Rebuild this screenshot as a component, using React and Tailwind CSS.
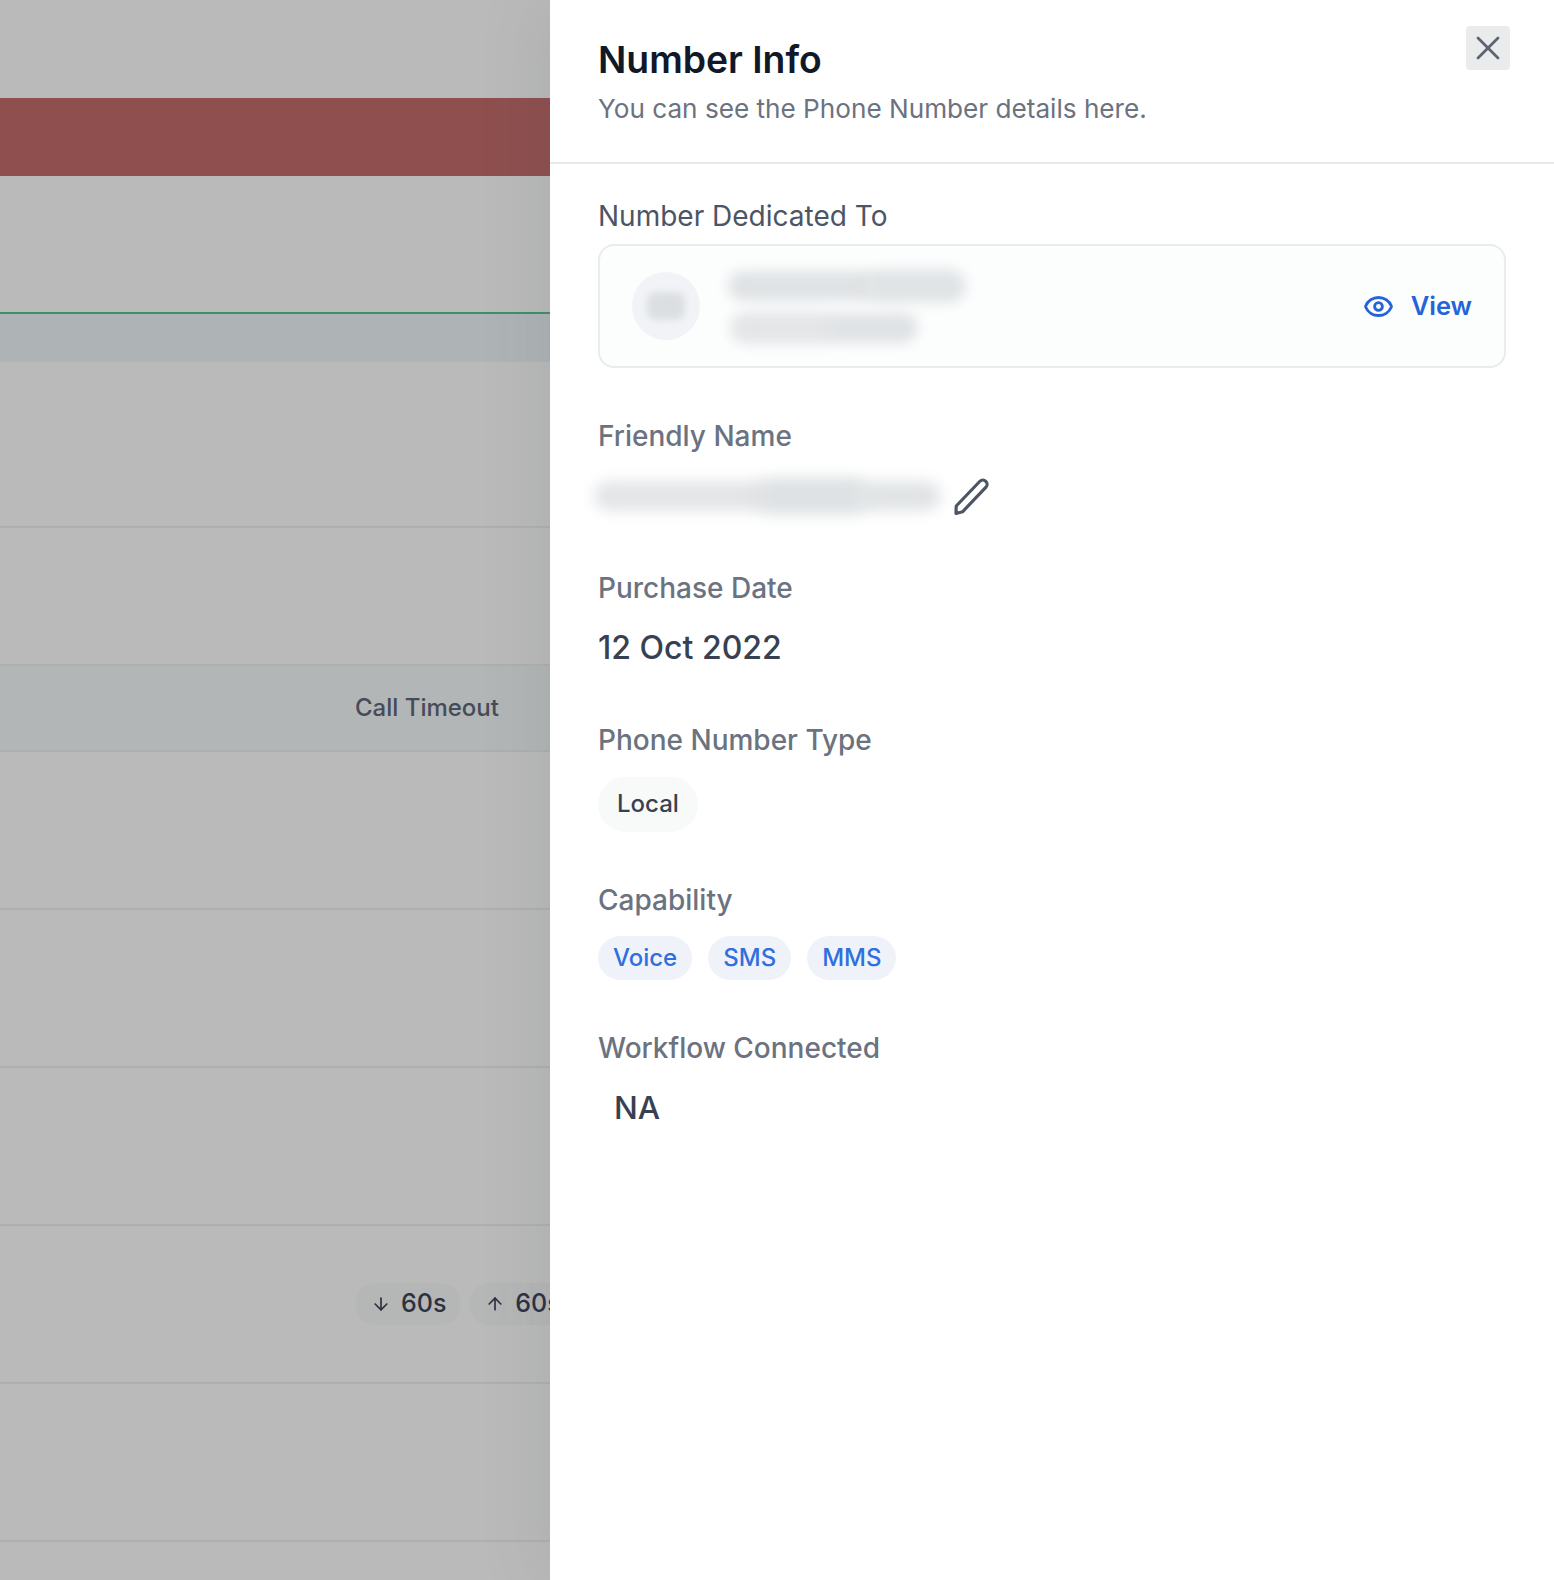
import React from "react";
import { X, Eye, ArrowDown, ArrowUp } from "lucide-react";

function Label({ className = "", children }) {
  return <div className={`text-[28px] leading-[36px] font-medium text-[#6b7280] ${className}`}>{children}</div>;
}

function DarkLabel({ className = "", children }) {
  return <div className={`text-[28px] leading-[36px] font-normal text-[#4b5563] ${className}`}>{children}</div>;
}

function Pill({ children }) {
  return <span className="flex h-[44px] items-center rounded-full bg-[#eff3f9] px-[15px] text-[24px] font-[450] text-[#2f6fde]">{children}</span>;
}

function Backdrop() {
  return (
    <div className="flex h-[1580px] w-[550px] shrink-0 flex-col overflow-hidden bg-[#bababa] text-[#454b57]">
      <div className="h-[98px] shrink-0" />
      <div className="h-[78px] shrink-0 bg-[#8f4f4f]" />
      <div className="h-[136px] shrink-0" />
      <div className="h-[50px] shrink-0 border-t-2 border-[#3f8f6e] bg-[#aeb3b5]" />
      <div className="h-[166px] shrink-0 border-b-2 border-[#afafaf]" />
      <div className="h-[138px] shrink-0 border-b-2 border-[#afafaf]" />
      <div className="flex h-[86px] shrink-0 items-center justify-start border-b-2 border-[#afafaf] bg-[#b3b6b6] pl-[355px] text-[24px] font-[450] whitespace-nowrap">
        Call Timeout
      </div>
      <div className="h-[158px] shrink-0 border-b-2 border-[#afafaf]" />
      <div className="h-[158px] shrink-0 border-b-2 border-[#afafaf]" />
      <div className="h-[158px] shrink-0 border-b-2 border-[#afafaf]" />
      <div className="flex h-[158px] shrink-0 items-center gap-[8px] border-b-2 border-[#afafaf] pl-[355px] text-[25px] font-[450] text-[#2c3140] whitespace-nowrap">
        <span className="flex h-[42px] shrink-0 items-center gap-[10px] rounded-full bg-[#b5b6b6] pr-[15px] pl-[16px]">
          <ArrowDown size={20} strokeWidth={2} />
          60s
        </span>
        <span className="flex h-[42px] shrink-0 items-center gap-[10px] rounded-full bg-[#b5b6b6] pr-[15px] pl-[16px]">
          <ArrowUp size={20} strokeWidth={2} />
          60s
        </span>
      </div>
      <div className="h-[158px] shrink-0 border-b-2 border-[#afafaf]" />
    </div>
  );
}

export default function App() {
  return (
    <div className="flex h-[1580px] w-full overflow-hidden bg-white font-['Inter',sans-serif]">
      <Backdrop />
      <div className="relative z-10 flex w-[1004px] shrink-0 flex-col bg-white shadow-[-10px_0_60px_rgba(70,80,90,0.1)]">
        <div className="flex h-[164px] shrink-0 items-start justify-between border-b-2 border-[#e6e9ee] pr-[44px] pl-[48px]">
          <div className="pt-[37px]">
            <h1 className="text-[37.3px] leading-[45px] font-semibold text-[#111827]">Number Info</h1>
            <p className="mt-[10px] text-[26.15px] leading-[34px] text-[#6b7280]">You can see the Phone Number details here.</p>
          </div>
          <button className="mt-[26px] flex h-[44px] w-[44px] items-center justify-center rounded-[4px] bg-[#e9ebec] text-[#5c6370]">
            <X size={40} strokeWidth={1.6} />
          </button>
        </div>

        <div className="flex flex-col pr-[48px] pl-[48px]">
          <DarkLabel className="mt-[34px]">Number Dedicated To</DarkLabel>
          <div className="mt-[10px] flex h-[124px] items-center justify-between rounded-[16px] border-2 border-[#e8ebef] bg-[#fcfdfd] pr-[32px] pl-[32px]">
            <div className="flex items-center gap-[28px]">
              <div className="flex h-[68px] w-[68px] items-center justify-center rounded-full bg-[#f1f3f7]">
                <div className="h-[28px] w-[38px] rounded-[9px] bg-[#dcdfe2] blur-[3px]" />
              </div>
              <div className="flex flex-col gap-[9px]">
                <div className="flex items-center">
                  <div className="h-[30px] w-[150px] rounded-full bg-[#e0e3e5] blur-[6px]" />
                  <div className="-ml-[14px] h-[34px] w-[102px] rounded-full bg-[#e1e4e6] blur-[6px]" />
                </div>
                <div className="ml-[2px] flex items-center">
                  <div className="h-[32px] w-[112px] rounded-full bg-[#e4e6e8] blur-[6px]" />
                  <div className="-ml-[14px] h-[30px] w-[90px] rounded-full bg-[#e0e3e5] blur-[6px]" />
                </div>
              </div>
            </div>
            <div className="flex items-center gap-[17px] text-[25.5px] font-semibold text-[#2563d9]">
              <Eye size={31} strokeWidth={2.2} />
              View
            </div>
          </div>

          <Label className="mt-[50px]">Friendly Name</Label>
          <div className="mt-[24px] flex h-[36px] items-center gap-[11px]">
            <div className="-ml-[4px] flex w-[347px] shrink-0 items-center">
              <div className="h-[30px] w-[176px] rounded-full bg-[#e3e5e7] blur-[7px]" />
              <div className="-ml-[16px] h-[38px] w-[116px] rounded-full bg-[#dfe2e4] blur-[7px]" />
              <div className="-ml-[16px] h-[30px] w-[87px] rounded-full bg-[#e1e4e6] blur-[7px]" />
            </div>
            <svg width="40" height="40" viewBox="0 0 38 38" fill="none" stroke="#4b5563" strokeWidth="3" strokeLinejoin="round">
              <path d="M4 28.5 26.5 5a4 4 0 0 1 5.6 0 4 4 0 0 1 .2 5.6L10 34l-6.2 1.6Z" />
            </svg>
          </div>

          <Label className="mt-[56px]">Purchase Date</Label>
          <div className="mt-[22px] text-[32px] leading-[40px] font-[450] text-[#374151]">12 Oct 2022</div>

          <Label className="mt-[54px]">Phone Number Type</Label>
          <div className="mt-[19px] flex">
            <span className="flex h-[55px] items-center rounded-full bg-[#f8f9f9] px-[19px] pb-[2px] text-[24px] font-[450] text-[#374151]">Local</span>
          </div>

          <Label className="mt-[50px]">Capability</Label>
          <div className="mt-[18px] flex gap-[16px]">
            <Pill>Voice</Pill>
            <Pill>SMS</Pill>
            <Pill>MMS</Pill>
          </div>

          <Label className="mt-[50px]">Workflow Connected</Label>
          <div className="mt-[22px] pl-[16px] text-[31.5px] leading-[40px] font-medium text-[#374151]">NA</div>
        </div>
      </div>
    </div>
  );
}
